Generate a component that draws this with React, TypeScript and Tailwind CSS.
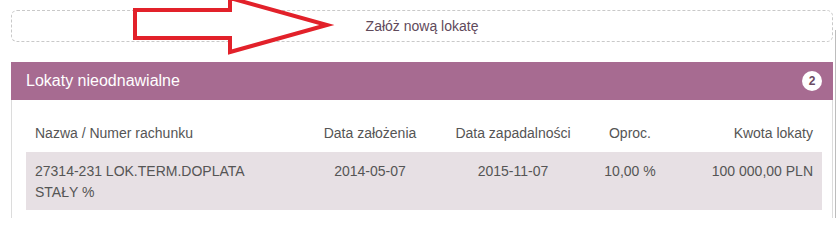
import React from "react";

const COLS = "grid grid-cols-[270px_148px_138px_96px_144px]";

const deposits = [
  {
    name: "27314-231 LOK.TERM.DOPLATA STAŁY %",
    opened: "2014-05-07",
    due: "2015-11-07",
    rate: "10,00 %",
    amount: "100 000,00 PLN",
  },
];

const App: React.FC = () => {
  return (
    <div className="relative w-[837px] h-[218px] overflow-hidden bg-white font-['Liberation_Sans',Arial,sans-serif] text-[14px] text-[#555]">
      <div className="pl-[11px] pr-[4px] pt-[10px]">
        {/* New deposit button */}
        <div className="h-[32px] rounded-[6px] border border-dashed border-[#c9c9c9] flex items-center justify-center text-[#5f4a5b]">
          Załóż nową lokatę
        </div>

        {/* Panel */}
        <div className="mt-[20px]">
          <div className="h-[38px] bg-[#a76b91] flex items-center justify-between pl-[15px] pr-[11px]">
            <span className="text-white text-[16px]">Lokaty nieodnawialne</span>
            <span className="w-[20px] h-[20px] rounded-full bg-white flex items-center justify-center text-[12px] font-bold text-[#6b4a62]">
              2
            </span>
          </div>
          <div className="border-x border-[#dcdcdc] pl-[14px] pr-[10px] pt-[14px] pb-[20px]">
            <div className={`${COLS} h-[38px] items-center`}>
              <div className="px-[9px]">Nazwa / Numer rachunku</div>
              <div className="px-[9px] text-center">Data założenia</div>
              <div className="px-[9px] text-center">Data zapadalności</div>
              <div className="px-[9px] text-center">Oproc.</div>
              <div className="px-[9px] text-right">Kwota lokaty</div>
            </div>
            {deposits.map((d) => (
              <div
                key={d.name}
                className={`${COLS} bg-[#e7e0e4] pt-[9px] pb-[7px] leading-[21px] items-start`}
              >
                <div className="px-[9px]">{d.name}</div>
                <div className="px-[9px] text-center">{d.opened}</div>
                <div className="px-[9px] text-center">{d.due}</div>
                <div className="px-[9px] text-center">{d.rate}</div>
                <div className="px-[9px] text-right">{d.amount}</div>
              </div>
            ))}
          </div>
        </div>
      </div>

      {/* window edge */}
      <div className="absolute left-[835px] top-[30px] bottom-0 w-px bg-[#bdbdbd]" />

      {/* red annotation arrow */}
      <svg
        className="absolute left-0 top-0 pointer-events-none"
        width="837"
        height="60"
        viewBox="0 0 837 60"
      >
        <polygon
          points="135,10 230,10 230,-2 327,25 230,52 230,38 135,38"
          fill="white"
          stroke="#e2212a"
          strokeWidth="4"
          strokeLinejoin="miter"
        />
      </svg>
    </div>
  );
};

export default App;
